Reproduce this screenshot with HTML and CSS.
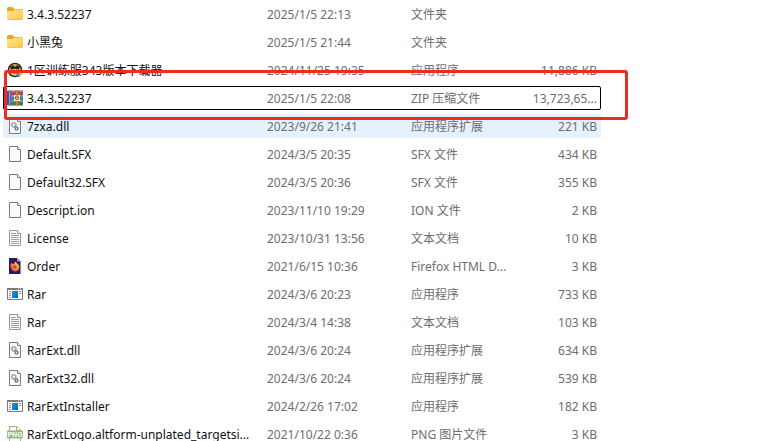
FILE: index.html
```html
<!DOCTYPE html>
<html lang="zh-CN">

<head>
    <meta charset="UTF-8">
    <meta name="viewport" content="width=device-width, initial-scale=1.0">
    <title>WinRAR</title>
    <link rel="stylesheet" href="styles.css">
</head>

<body>
    <!-- icons -->
    <svg class="sprite" aria-hidden="true">
        <defs>
            <linearGradient id="folderFill" x1="0" y1="0" x2="1" y2="1">
                <stop offset="0" stop-color="#ffe394" />
                <stop offset="1" stop-color="#fbc94a" />
            </linearGradient>
            <linearGradient id="appFill" x1="0" y1="0" x2="1" y2="1">
                <stop offset="0" stop-color="#2a92dc" />
                <stop offset="1" stop-color="#0067b8" />
            </linearGradient>
            <linearGradient id="foxFill" x1="1" y1="0" x2="0" y2="1">
                <stop offset="0" stop-color="#ffd83d" />
                <stop offset="0.5" stop-color="#ff8a2b" />
                <stop offset="1" stop-color="#ee2f55" />
            </linearGradient>
        </defs>
        <symbol id="folder" viewBox="0 0 16 16">
            <path d="M0 2.5Q0 1 1.5 1H5.5L7.5 3H14.5Q16 3 16 4.5V8H0Z" fill="#e5a91c" />
            <path d="M0 5.5Q0 5 .8 5H6L8 3.6H15Q16 3.6 16 4.6V12.6Q16 14 14.6 14H1.4Q0 14 0 12.6Z" fill="url(#folderFill)" />
            <path d="M.6 13.4Q1 14 1.6 14H14.4Q15 14 15.4 13.4Z" fill="#e6b53b" />
        </symbol>
        <symbol id="page" viewBox="0 0 16 16">
            <path d="M2.5.5H10.5L13.5 3.5V15.5H2.5Z" fill="#fafafa" stroke="#7c7c7c" />
            <path d="M10.5.5V3.5H13.5" fill="#fff" stroke="#7c7c7c" />
        </symbol>
        <symbol id="text" viewBox="0 0 16 16">
            <path d="M2.5.5H10.5L13.5 3.5V15.5H2.5Z" fill="#fafafa" stroke="#999" />
            <path d="M10.5.5V3.5H13.5" fill="#fff" stroke="#999" />
            <path d="M4 3.5H9M4 5.5H12M4 7.5H12M4 9.5H12M4 11.5H12M4 13.5H12" stroke="#a0a0a0" fill="none" />
        </symbol>
        <symbol id="dll" viewBox="0 0 16 16">
            <use href="#page" />
            <circle cx="6.8" cy="6.8" r="1.9" fill="none" stroke="#9aa4ad" stroke-width="1.4" />
            <circle cx="6.8" cy="6.8" r="2.7" fill="none" stroke="#9aa4ad" stroke-dasharray="1 1.12" />
            <circle cx="9.5" cy="10.5" r="1.3" fill="#fff" stroke="#6f7b86" stroke-width="1.2" />
            <circle cx="9.5" cy="10.5" r="2.1" fill="none" stroke="#6f7b86" stroke-width=".8" stroke-dasharray=".8 .85" />
        </symbol>
        <symbol id="app" viewBox="0 0 16 16">
            <path d="M.5 2.5H15.5V13.5H.5Z" fill="#fff" stroke="#7c7c7c" />
            <path d="M0 2H16V4H0Z" fill="#7c7c7c" />
            <path d="M11 3H12M13 3H14" stroke="#fff" />
            <path d="M2 5.5H4M2 7.5H4M2 9.5H4M2 11.5H4M12 5.5H14M12 7.5H14" stroke="#929292" />
            <path d="M5 5H11V12H5Z" fill="url(#appFill)" />
        </symbol>
        <symbol id="firefox" viewBox="0 0 16 16">
            <path d="M2 0H10L13.5 3.5V16H2Z" fill="#291c59" />
            <path d="M10 0V3.5H13.5Z" fill="#a48ce0" />
            <path d="M3.4 7.5Q3.6 5.6 4.8 4.7L5.4 6Q6.5 5.5 7.2 5.8Q7.3 4.2 8.8 3.5Q9 5 10.6 5.8Q12.4 7 12.3 9.2Q12 13.2 8 13.4Q3.8 13.2 3.4 7.5Z" fill="url(#foxFill)" />
            <circle cx="7.8" cy="9" r="1.8" fill="#8547c7" />
            <path d="M5.2 7.5Q7 7 8 8.1L6.4 9Q7 11 9.5 10Q8 12.5 5.8 11Z" fill="#ff6a32" />
        </symbol>
        <symbol id="zip" viewBox="0 0 16 16">
            <path d="M0 1L2 .5V15.5L0 15Z" fill="#4a4a95" />
            <path d="M2 .5H16V5.5H2Z" fill="#b8424d" />
            <path d="M2 5.5H16V10.5H2Z" fill="#4377c4" />
            <path d="M2 10.5H16V15.5H2Z" fill="#388451" />
            <path d="M2 .5H4V15.5H2Z" fill="#5468b4" />
            <path d="M2.5 .5V15.5" stroke="#8da6d8" />
            <path d="M4 1.5H16M4 6.5H16M4 11.5H16" stroke="#fff" stroke-opacity=".25" />
            <path d="M8 .5H12V15.5H8Z" fill="#b98645" />
            <path d="M8.5 1V15M11.5 1V15" stroke="#805626" stroke-width=".6" />
            <path d="M7 5H13V11H7Z" fill="#f7e4c4" />
            <path d="M8.5 6.5V8.5Q10 10.5 11.5 8.5V6.5" fill="none" stroke="#9b5a28" stroke-width="1.2" />
            <path d="M10 5V8" stroke="#7d451e" />
        </symbol>
        <symbol id="downloader" viewBox="0 0 16 16">
            <circle cx="8" cy="8" r="7.3" fill="#2b251e" />
            <circle cx="8" cy="8" r="5.9" fill="#dfae3c" />
            <path d="M3 4.2L6 3.2L8 5L10 3.2L13 4.2L12 7.4H4Z" fill="#2c2620" />
            <path d="M5 7H11L10 12L8 13.2L6 12Z" fill="#f1ddb2" />
            <path d="M5.5 8H7.2M8.8 8H10.5M6.5 11H9.5" stroke="#2c2620" stroke-width="1.1" />
            <path d="M9 10.5L12.5 9.5L12 15.5Q9.5 14.5 9 10.5Z" fill="#3e8bd0" />
            <path d="M12.3 9.5L15.5 10.5Q15.4 14 12.3 15.5Z" fill="#f0c338" />
        </symbol>
    </svg>

    <main class="file-list">
        <table>
            <colgroup>
                <col class="col-name">
                <col class="col-date">
                <col class="col-type">
                <col class="col-size">
            </colgroup>
            <tbody>
                <tr>
                    <td class="name"><svg><use href="#folder" /></svg>3.4.3.52237</td>
                    <td>2025/1/5 22:13</td>
                    <td>文件夹</td>
                    <td class="size"></td>
                </tr>
                <tr>
                    <td class="name"><svg><use href="#folder" /></svg>小黑兔</td>
                    <td>2025/1/5 21:44</td>
                    <td>文件夹</td>
                    <td class="size"></td>
                </tr>
                <tr>
                    <td class="name"><svg><use href="#downloader" /></svg>1区训练服343版本下载器</td>
                    <td>2024/11/25 19:35</td>
                    <td>应用程序</td>
                    <td class="size">11,886 KB</td>
                </tr>
                <tr class="focused">
                    <td class="name"><svg><use href="#zip" /></svg>3.4.3.52237</td>
                    <td>2025/1/5 22:08</td>
                    <td>ZIP 压缩文件</td>
                    <td class="size">13,723,65...</td>
                </tr>
                <tr class="hovered">
                    <td class="name"><svg><use href="#dll" /></svg>7zxa.dll</td>
                    <td>2023/9/26 21:41</td>
                    <td>应用程序扩展</td>
                    <td class="size">221 KB</td>
                </tr>
                <tr>
                    <td class="name"><svg><use href="#page" /></svg>Default.SFX</td>
                    <td>2024/3/5 20:35</td>
                    <td>SFX 文件</td>
                    <td class="size">434 KB</td>
                </tr>
                <tr>
                    <td class="name"><svg><use href="#page" /></svg>Default32.SFX</td>
                    <td>2024/3/5 20:36</td>
                    <td>SFX 文件</td>
                    <td class="size">355 KB</td>
                </tr>
                <tr>
                    <td class="name"><svg><use href="#page" /></svg>Descript.ion</td>
                    <td>2023/11/10 19:29</td>
                    <td>ION 文件</td>
                    <td class="size">2 KB</td>
                </tr>
                <tr>
                    <td class="name"><svg><use href="#text" /></svg>License</td>
                    <td>2023/10/31 13:56</td>
                    <td>文本文档</td>
                    <td class="size">10 KB</td>
                </tr>
                <tr>
                    <td class="name"><svg><use href="#firefox" /></svg>Order</td>
                    <td>2021/6/15 10:36</td>
                    <td>Firefox HTML D...</td>
                    <td class="size">3 KB</td>
                </tr>
                <tr>
                    <td class="name"><svg><use href="#app" /></svg>Rar</td>
                    <td>2024/3/6 20:23</td>
                    <td>应用程序</td>
                    <td class="size">733 KB</td>
                </tr>
                <tr>
                    <td class="name"><svg><use href="#text" /></svg>Rar</td>
                    <td>2024/3/4 14:38</td>
                    <td>文本文档</td>
                    <td class="size">103 KB</td>
                </tr>
                <tr>
                    <td class="name"><svg><use href="#dll" /></svg>RarExt.dll</td>
                    <td>2024/3/6 20:24</td>
                    <td>应用程序扩展</td>
                    <td class="size">634 KB</td>
                </tr>
                <tr>
                    <td class="name"><svg><use href="#dll" /></svg>RarExt32.dll</td>
                    <td>2024/3/6 20:24</td>
                    <td>应用程序扩展</td>
                    <td class="size">539 KB</td>
                </tr>
                <tr>
                    <td class="name"><svg><use href="#app" /></svg>RarExtInstaller</td>
                    <td>2024/2/26 17:02</td>
                    <td>应用程序</td>
                    <td class="size">182 KB</td>
                </tr>
                <tr>
                    <td class="name"><svg viewBox="0 0 16 16">
                            <path d="M2.5 5V.5H10L13.5 4V5M2.5 12V15.5H13.5V12M9.5.5V4.5H13.5" fill="#fff" stroke="#97b881" />
                            <path d="M0 5.5Q0 4.5 1 4.5H15Q16 4.5 16 5.5V11.5Q16 12.5 15 12.5H1Q0 12.5 0 11.5Z" fill="#93b67c" />
                            <text x="8" y="11" text-anchor="middle" class="png-label">PNG</text>
                        </svg>RarExtLogo.altform-unplated_targetsi...</td>
                    <td>2021/10/22 0:36</td>
                    <td>PNG 图片文件</td>
                    <td class="size">3 KB</td>
                </tr>
            </tbody>
        </table>

        <!-- red marker round the zip file -->
        <div class="marker"></div>
    </main>
</body>

</html>
```

FILE: styles.css
```css
body {
    margin: 0;
    height: 100vh;
    overflow: hidden;
    background-color: #fff;
    color: #6d6d6d;
    font-family: "Noto Sans", "Noto Sans CJK SC", sans-serif;
    font-size: 12px;
    line-height: 22px;
}

.sprite {
    display: block;
    width: 0;
    height: 0;
}

.file-list {
    position: relative;
    margin: 0 159px 0 3px;
}

table {
    width: 100%;
    margin-top: -2px;
    table-layout: fixed;
    border-collapse: separate;
    border-spacing: 0 4px;
}

.col-date {
    width: 144px;
}

.col-type {
    width: 114px;
}

.col-size {
    width: 82px;
}

td {
    padding: 2px 4px 0 6px;
    white-space: nowrap;
}

.name {
    padding: 2px 0 0 4px;
    color: #111;
}

.name svg {
    width: 16px;
    height: 16px;
    margin-right: 4px;
    vertical-align: -3px;
}

.size {
    text-align: right;
}

.hovered {
    background-color: #e5f2fe;
}

.focused {
    outline: 1px solid #000;
    outline-offset: -1px;
    border-radius: 2px;
}

.png-label {
    font-family: "Liberation Sans", sans-serif;
    font-size: 7px;
    font-weight: bold;
    fill: #fff;
}

.marker {
    position: absolute;
    top: 72px;
    left: 1px;
    right: -27px;
    height: 44px;
    border: 3px solid #ed2b22;
    border-radius: 3px;
}
```
